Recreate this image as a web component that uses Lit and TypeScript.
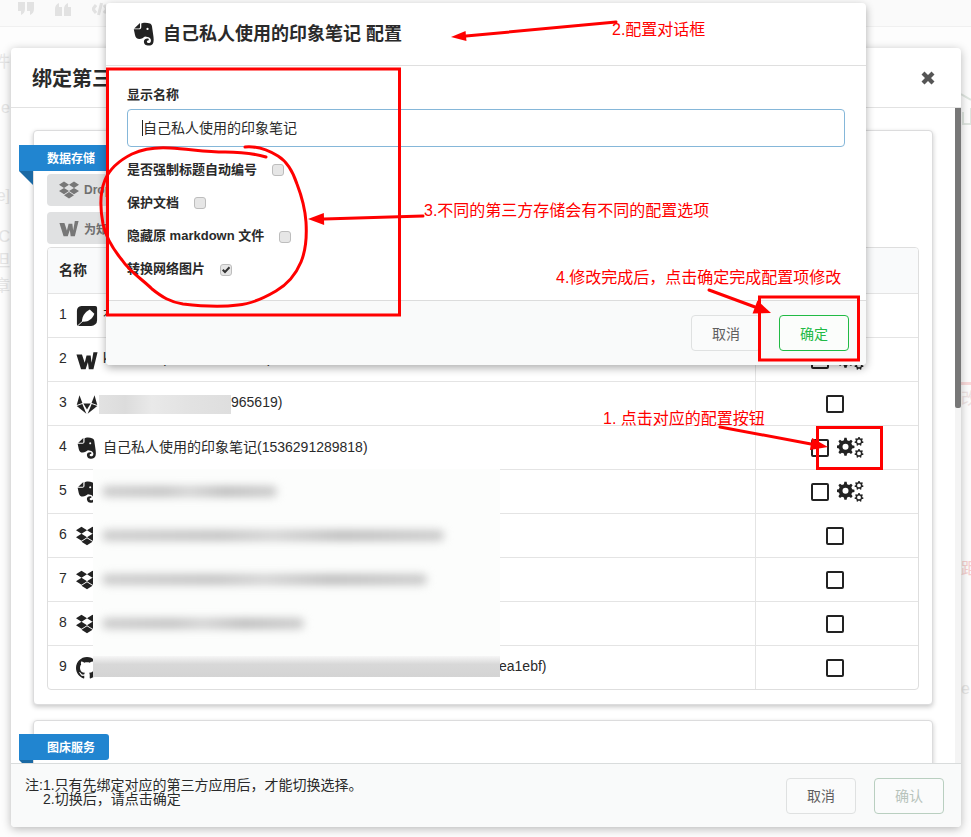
import { LitElement, html, css, svg } from "lit";
import { customElement } from "lit/decorators.js";

const gearPath = (cx: number, cy: number, r: number, hole: number, teeth: number) => {
  const pts: string[] = [];
  const inner = r * 0.76;
  const step = (Math.PI * 2) / teeth;
  for (let i = 0; i < teeth; i++) {
    const a = i * step - Math.PI / 2;
    const w = step * 0.2;
    const seq: [number, number][] = [
      [inner, a - w * 1.5],
      [r, a - w * 0.8],
      [r, a + w * 0.8],
      [inner, a + w * 1.5],
    ];
    for (const [rad, ang] of seq) {
      pts.push(`${(cx + rad * Math.cos(ang)).toFixed(2)} ${(cy + rad * Math.sin(ang)).toFixed(2)}`);
    }
  }
  const ring = `M${cx - hole} ${cy}a${hole} ${hole} 0 1 0 ${hole * 2} 0a${hole} ${hole} 0 1 0 ${-hole * 2} 0z`;
  return `M${pts.join("L")}Z${ring}`;
};

const gears = html`<svg class="gears" viewBox="0 0 27 21" width="27" height="21">
  <path fill-rule="evenodd" fill="#222" d="${gearPath(8.5, 9.8, 9, 3, 8)}"></path>
  <path fill-rule="evenodd" fill="#222" d="${gearPath(22, 4.4, 4.5, 1.9, 7)}"></path>
  <path fill-rule="evenodd" fill="#222" d="${gearPath(22, 16.4, 4.5, 1.9, 7)}"></path>
</svg>`;

const ICONS: Record<string, unknown> = {
  leaf: svg`<path d="M6 1H21a2 2 0 0 1 2 2V16.500a6.500 6.500 0 0 1-6.500 6.500H3a2 2 0 0 1-2-2V6.500A5.500 5.500 0 0 1 6 1z"/>
    <path fill="#fff" d="M6.500 18C6.500 12 10.500 7.500 15 5l5 4.500C18 15.500 12.500 19 6.500 18z"/>
    <path stroke="#fff" stroke-width="1" d="M2 22.500L8 17"/>`,
  wiz: svg`<path d="M.5 6H6.500L9.500 15 11.500 7H16L17 15 19 3.500H23.500L19 22H14L13 14.500 10.500 22H5.500z"/>`,
  gitlab: svg`<path d="M.8 13L3.800 2.500 7 10.800z"/><path d="M23.200 13L20.200 2.500 17 10.800z"/>
    <path d="M8 11.500H16L12 18z"/><path d="M.8 14.300L6.900 12 11.300 22.500z"/><path d="M23.200 14.300L17.100 12 12.700 22.500z"/>`,
  evernote: svg`<path d="M8 5.600c0 .5-.3.8-.8.8H3.500c-.6 0-1 .1-1.300.2L8 1c-.02.5 0 1.200 0 2z"/>
    <path fill-rule="evenodd" d="M9.300 1.500C11 .3 15 .4 18 1.500 19.200 2 19.800 3 20 4.500L21.500 15C22 19 21.500 22 19.500 23 17.500 24 14.500 23.700 13 22.500 11.500 21 11.500 18.500 13 17.300 14 16.500 15.500 16.300 16.500 16.800 17 17.300 17 18 16.300 18.500 15.300 18.500 14.700 19.200 14.900 20 15.200 21 16.500 21.300 17.500 21 18.800 20.500 19.200 19 18.800 17.500 18.300 16 17 15.300 15.500 15L13 14.500C11.500 15.500 9.500 17 7.500 17 5 17 3.500 15.500 3 13L1.800 7.300H7C8.500 7.300 9.300 6.500 9.300 5zM15.500 5.800a1.100 1.100 0 1 0 .01 0z"/>`,
  dropbox: svg`<path d="M6 1.807L0 5.629l6 3.822 6.001-3.822L6 1.807zM18 1.807l-6 3.822 6 3.822 6-3.822-6-3.822zM0 13.274l6 3.822 6.001-3.822L6 9.452l-6 3.822zM18 9.452l-6 3.822 6 3.822 6-3.822-6-3.822zM6 18.371l6.001 3.822 6-3.822-6-3.822L6 18.371z"/>`,
  github: svg`<path transform="scale(1.5)" d="M8 0C3.580 0 0 3.580 0 8c0 3.540 2.290 6.530 5.470 7.590.4.070.55-.17.55-.38 0-.19-.01-.82-.01-1.490-2.010.37-2.530-.49-2.690-.94-.09-.23-.48-.94-.82-1.130-.28-.15-.68-.52-.01-.53.63-.01 1.080.58 1.230.82.72 1.210 1.870.87 2.330.66.070-.52.28-.87.51-1.070-1.780-.2-3.640-.89-3.640-3.950 0-.87.31-1.590.82-2.150-.08-.2-.36-1.020.08-2.120 0 0 .67-.21 2.200.82.64-.18 1.320-.27 2-.27.68 0 1.360.09 2 .27 1.530-1.040 2.200-.82 2.200-.82.44 1.100.16 1.920.08 2.120.51.56.82 1.270.82 2.150 0 3.070-1.870 3.750-3.650 3.950.29.25.54.73.54 1.480 0 1.070-.01 1.930-.01 2.200 0 .21.15.46.55.38A8.013 8.013 0 0 0 16 8c0-4.420-3.580-8-8-8z"/>`,
};

const icon = (name: string, size = 22, color = "#222") =>
  html`<svg class="ic" viewBox="0 0 24 24" width="${size}" height="${size}" style="fill:${color}">${ICONS[name]}</svg>`;

interface Row {
  icon: string;
  name: string;
  gear?: boolean;
  smudge?: number;
  indent?: number;
}

const ROWS: Row[] = [
  { icon: "leaf", name: "有道云笔记(1536291289818)", gear: true },
  { icon: "wiz", name: "kevinlees(1536291289818)", gear: true },
  { icon: "gitlab", name: "965619)", smudge: 132 },
  { icon: "evernote", name: "自己私人使用的印象笔记(1536291289818)", gear: true },
  { icon: "evernote", name: "", gear: true },
  { icon: "dropbox", name: "" },
  { icon: "dropbox", name: "" },
  { icon: "dropbox", name: "" },
  { icon: "github", name: "ea1ebf)", indent: 401 },
];

const BLURS = [175, 342, 325, 202];
const GHOST_LEFT: [string, number][] = [["件", 45], ["e", 46], ["e]", 88], ["C", 41], ["但", 24], ["章", 25]];

const HAND =
  "M245 147C255 146 268 150 278 156C288 162 293 172 297 184C302 197 305 208 306 222C307 238 306 250 301 262C296 274 288 284 276 291C264 298 252 304 238 305C222 307 200 306 183 304C170 302 162 297 152 289C142 279 130 272 122 260C113 249 106 238 103 224C100 208 100 192 105 180C110 168 120 160 132 154C143 149 155 147 170 148C190 149 205 152 225 152C240 152 252 153 266 157";

const arrows: { from: [number, number]; tip: [number, number]; base: [number, number]; wing: number }[] = [
  { from: [616, 22], tip: [451, 37], base: [466, 36], wing: 5 },
  { from: [423, 216], tip: [308, 219], base: [324, 219], wing: 6 },
  { from: [709, 290], tip: [771, 313], base: [755, 307], wing: 7 },
  { from: [720, 427], tip: [828, 447], base: [811, 444], wing: 6 },
];

const NOTES: [string, number, number][] = [
  ["2.配置对话框", 612, 30],
  ["3.不同的第三方存储会有不同的配置选项", 424, 211],
  ["4.修改完成后，点击确定完成配置项修改", 556, 278],
  ["1. 点击对应的配置按钮", 603, 419],
];
const BOXES: [number, number, number, number][] = [
  [107.5, 69, 292, 246],
  [759.5, 297, 99, 63],
  [817.5, 427.500, 64, 41],
];

@customElement("app-root")
export class AppRoot extends LitElement {
  static styles = css`
    :host {
      display: block;
      position: relative;
      width: 971px;
      height: 837px;
      overflow: hidden;
      background: #fdfdfd;
      font-family: "Liberation Sans", "Noto Sans CJK SC", sans-serif;
      font-size: 14px;
      color: #2a2a2a;
    }
    .toolbar {
      height: 26px;
      box-sizing: content-box;
      display: flex;
      gap: 21px;
      padding-left: 18px;
      align-items: flex-start;
      background: #fafafa;
      border-bottom: 1px solid #f0f0f0;
    }
    .tool { display: block; margin-top: 2px; fill: none; stroke: none; }
    .tool-fill { fill: #e2e2e2; }
    .tool-line { fill: none; stroke: #e2e2e2; stroke-width: 3; }
    .ghosts { display: flex; justify-content: space-between; }
    .ghost-col { width: 10px; display: flex; flex-direction: column; overflow: hidden; color: #e6e6e6; font-size: 16px; line-height: 20px; }
    .ghost-item { display: flex; justify-content: flex-end; align-items: flex-end; white-space: nowrap; }
    .ghost-right { width: 10px; display: flex; flex-direction: column; color: #efe4e4; font-size: 16px; line-height: 20px; }
    .house { display: block; margin-top: 63px; margin-bottom: 256px; fill: none; stroke: #dfe6e0; stroke-width: 2; }
    .pink-line { height: 3px; background: #f9dada; margin-bottom: 4px; }
    .pink-1 { height: 30px; }
    .pink-2 { height: 160px; color: #f6cfcf; display: flex; align-items: flex-end; }
    .pink-3 { height: 120px; color: #e6e6e6; display: flex; align-items: flex-end; }

    .modal {
      position: absolute;
      left: 11px;
      top: 48px;
      width: 950px;
      height: 779px;
      display: flex;
      flex-direction: column;
      background: #fff;
      border-radius: 4px;
      box-shadow: 0 2px 10px rgba(0, 0, 0, 0.28);
    }
    .modal-head {
      flex: none;
      height: 60px;
      box-sizing: border-box;
      border-bottom: 1px solid #e2e2e2;
      padding: 0 26px 0 21px;
      display: flex;
      align-items: center;
      justify-content: space-between;
      font-size: 20px;
      font-weight: 700;
    }
    .close { display: block; fill: #555; }
    .modal-body {
      flex: 1;
      min-height: 0;
      position: relative;
      overflow: hidden;
      padding: 22px 28px 0 22px;
      display: flex;
      flex-direction: column;
      gap: 15px;
      background: #fff;
    }
    .scrollbar { position: absolute; right: 0; top: 0; width: 6px; height: 100%; background: #f4f4f4; }
    .thumb { height: 300px; background: #777; border-radius: 0 0 2px 2px; }
    .card {
      position: relative;
      flex: none;
      box-sizing: border-box;
      border: 1px solid #dcdcdd;
      border-radius: 4px;
      background: #fff;
      box-shadow: 0 2px 5px rgba(0, 0, 0, 0.22);
      padding: 43px 13px 0;
      display: flex;
      flex-direction: column;
      height: 575px;
    }
    .card.second { height: 120px; }
    .ribbon {
      position: absolute;
      left: -15px;
      top: 14px;
      width: 90px;
      height: 26px;
      box-sizing: border-box;
      padding: 0 0 2px 28px;
      display: flex;
      align-items: center;
      background: #2185d0;
      color: #fff;
      font-size: 12px;
      font-weight: 700;
      border-radius: 0 3px 3px 0;
    }
    .card.second .ribbon { top: 13px; }
    .ribbon::after {
      content: "";
      position: absolute;
      left: 0;
      top: 100%;
      border-style: solid;
      border-width: 0 14px 14px 0;
      border-color: transparent #1a69a4 transparent transparent;
    }
    .sources { display: flex; flex-direction: column; gap: 6px; margin-bottom: 3px; }
    .source {
      width: 120px;
      height: 32px;
      box-sizing: border-box;
      padding-left: 12px;
      display: flex;
      align-items: center;
      gap: 5px;
      background: #e0e1e2;
      border-radius: 4px;
      color: #6f6f6f;
      font-size: 12px;
      font-weight: 700;
    }
    .table {
      position: relative;
      flex: none;
      height: 443px;
      box-sizing: border-box;
      border: 1px solid #dedede;
      border-radius: 4px;
      display: flex;
      flex-direction: column;
      overflow: hidden;
    }
    .thead {
      flex: none;
      height: 45px;
      display: grid;
      grid-template-columns: 1fr 163px;
      background: #f9fafb;
      font-weight: 700;
      align-items: center;
    }
    .thead > div:first-child { padding: 0 0 4px 11px; }
    .thead > div:last-child { height: 100%; border-left: 1px solid #e4e4e4; }
    .trow {
      flex: none;
      height: 44px;
      box-sizing: border-box;
      border-top: 1px solid #e4e4e4;
      display: grid;
      grid-template-columns: 1fr 163px;
    }
    .cell-name { display: flex; align-items: center; padding-left: 11px; min-width: 0; }
    .num { width: 17px; flex: none; padding-bottom: 3px; }
    .ic { flex: none; display: block; }
    .name { margin-left: 5px; white-space: nowrap; padding-bottom: 3px; }
    .smudge {
      flex: none;
      height: 19px;
      margin-left: 1px;
      margin-top: 2px;
      background: linear-gradient(90deg, #e2e2e2 0, #dcdcdc 20%, #e9e9e9 40%, #e2e2e2 70%, #dedede 100%);
    }
    .smudge + .name { margin-left: 0; }
    .cell-act {
      border-left: 1px solid #e4e4e4;
      display: flex;
      align-items: center;
      justify-content: center;
      gap: 8px;
      padding-left: 1px;
    }
    .cell-act.plain { padding: 0 5px 0 0; }
    .box { width: 14px; height: 14px; border: 2px solid #222; border-radius: 2px; flex: none; background: #fff; }
    .gears { display: block; flex: none; }
    .blur-patch {
      position: absolute;
      left: 45px;
      top: 221px;
      width: 407px;
      height: 208px;
      background: #fcfdfc;
      overflow: hidden;
      display: flex;
      flex-direction: column;
    }
    .blur-row { flex: none; height: 44px; display: flex; align-items: center; padding-left: 9px; }
    .blur-bar {
      height: 11px;
      background: linear-gradient(90deg, #cbcbcb 0, #c2c2c2 35%, #d2d2d2 50%, #bcbcbc 70%, #cacaca 100%);
      filter: blur(4px);
      border-radius: 5px;
    }
    .blur-last {
      flex: 1;
      margin-top: 11px;
      background: linear-gradient(180deg, #f6f6f6 0, #d8d8d8 40%, #d4d4d4 100%);
    }
    .modal-foot {
      flex: none;
      position: relative;
      height: 64px;
      box-sizing: border-box;
      border-top: 1px solid #d9dcdc;
      background: #f9fafa;
      border-radius: 0 0 4px 4px;
      padding: 0 17px 0 14px;
      display: flex;
      align-items: center;
      justify-content: space-between;
      font-size: 14px;
      line-height: 14px;
    }
    .foot-note { padding-bottom: 8px; }
    .foot-note div + div { padding-left: 18px; }
    .btns { display: flex; gap: 18px; }
    .btn {
      width: 70px;
      height: 36px;
      box-sizing: border-box;
      border: 1px solid #dfe1e1;
      border-radius: 4px;
      display: flex;
      align-items: center;
      justify-content: center;
      font-size: 14px;
      color: #5f5f5f;
      background: #fafbfb;
    }
    .btn.faded { border-color: #b9cfc0; color: #b8c4bc; }
    .btn.ok { border-color: #21ba45; color: #21ba45; background: #fbfdfb; }

    .dialog {
      position: absolute;
      left: 106px;
      top: 3px;
      width: 760px;
      height: 362px;
      display: flex;
      flex-direction: column;
      background: #fff;
      border-radius: 4px;
      box-shadow: 0 3px 9px rgba(0, 0, 0, 0.32);
    }
    .dialog-head {
      flex: none;
      height: 63px;
      box-sizing: border-box;
      border-bottom: 1px solid #dfdfdf;
      padding-left: 26px;
      display: flex;
      align-items: center;
      gap: 7px;
      font-size: 18px;
      font-weight: 700;
    }
    .dialog-title { padding-bottom: 5px; }
    .dialog-body {
      flex: 1;
      min-height: 0;
      box-sizing: border-box;
      padding: 21px 21px 0;
      font-size: 13px;
      font-weight: 700;
      line-height: 16px;
    }
    .input {
      margin-top: 6px;
      height: 38px;
      box-sizing: border-box;
      border: 1px solid #85b7d9;
      border-radius: 4px;
      padding-left: 14px;
      display: flex;
      align-items: center;
      font-size: 14px;
      font-weight: 400;
    }
    .caret { width: 1px; height: 16px; background: #222; }
    .options { margin-top: 13px; display: flex; flex-direction: column; gap: 13.333px; }
    .opt { height: 20px; display: flex; align-items: center; gap: 15px; white-space: nowrap; }
    .opt-label { padding-bottom: 1px; }
    .chk {
      width: 12px;
      height: 12px;
      box-sizing: border-box;
      border: 1px solid #bdbdbd;
      border-radius: 3px;
      background: #e6e6e6;
      flex: none;
      display: flex;
      align-items: center;
      justify-content: center;
    }
    .dialog-foot {
      flex: none;
      height: 65px;
      box-sizing: border-box;
      border-top: 1px solid #dcdcdc;
      background: #f9fafa;
      border-radius: 0 0 4px 4px;
      padding-right: 17px;
      display: flex;
      align-items: center;
      justify-content: flex-end;
    }
    .overlay { position: absolute; left: 0; top: 0; pointer-events: none; }
    .note {
      position: absolute;
      font-size: 16px;
      line-height: 20px;
      color: #f00;
      white-space: nowrap;
    }
  `;

  private renderRow(r: Row, i: number) {
    return html`<div class="trow">
      <div class="cell-name">
        <span class="num">${i + 1}</span>
        ${icon(r.icon)}
        ${r.smudge ? html`<span class="smudge" style="width:${r.smudge}px"></span>` : ""}
        <span class="name" style="margin-left:${r.indent ? r.indent + "px" : ""}">${r.name}</span>
      </div>
      <div class="cell-act ${r.gear ? "" : "plain"}">
        <span class="box"></span>${r.gear ? gears : ""}
      </div>
    </div>`;
  }

  private arrow(a: (typeof arrows)[number]) {
    const [bx, by] = a.base;
    const dx = a.tip[0] - a.from[0];
    const dy = a.tip[1] - a.from[1];
    const len = Math.hypot(dx, dy);
    const nx = (-dy / len) * a.wing;
    const ny = (dx / len) * a.wing;
    return svg`<line x1="${a.from[0]}" y1="${a.from[1]}" x2="${bx}" y2="${by}" stroke="#f00" stroke-width="3" stroke-linecap="round"></line>
      <polygon fill="#f00" points="${a.tip[0]},${a.tip[1]} ${bx + nx},${by + ny} ${bx - nx},${by - ny}"></polygon>`;
  }

  render() {
    return html`
      <div class="toolbar">
        <svg class="tool" width="16" height="14" viewBox="0 0 16 14"><path class="tool-fill" d="M0 0h7v7c0 3-1.500 5-4 6V9H0zM9 0h7v7c0 3-1.500 5-4 6V9H9z"></path></svg>
        <svg class="tool" width="16" height="14" viewBox="0 0 16 14"><path class="tool-fill" d="M7 14H0V7c0-3 1.500-5 4-6v4h3zM16 14H9V7c0-3 1.500-5 4-6v4h3z"></path></svg>
        <svg class="tool" width="16" height="14" viewBox="0 0 16 14"><path class="tool-line" d="M4 3L1 7l3 4M12 3l3 4-3 4M9.500 1l-3 12"></path></svg>
      </div>
      <div class="ghosts">
        <div class="ghost-col">
          ${GHOST_LEFT.map(([t, h]) => html`<div class="ghost-item" style="height:${h}px">${t}</div>`)}
        </div>
        <div class="ghost-right">
          <svg class="house" width="10" height="36" viewBox="0 0 10 36"><path d="M0 4L10 10M2 22v12h8v-16"></path></svg>
          <div class="pink-line"></div>
          <div class="pink-1">改</div>
          <div class="pink-2">距</div>
          <div class="pink-3">e</div>
        </div>
      </div>

      <section class="modal">
        <header class="modal-head">
          <span>绑定第三方应用</span>
          <svg class="close" width="14" height="14" viewBox="0 0 14 14"><path d="M3.500.5L7 4 10.500.5 13.500 3.500 10 7l3.500 3.500-3 3L7 10l-3.500 3.500-3-3L4 7 .5 3.500z"></path></svg>
        </header>
        <div class="modal-body">
          <div class="card">
            <div class="ribbon">数据存储</div>
            <div class="sources">
              <div class="source">${icon("dropbox", 20, "#777")}<span>Dropbox</span></div>
              <div class="source">${icon("wiz", 20, "#777")}<span>为知笔记</span></div>
            </div>
            <div class="table">
              <div class="thead"><div>名称</div><div></div></div>
              ${ROWS.map((r, i) => this.renderRow(r, i))}
              <div class="blur-patch">
                ${BLURS.map((w) => html`<div class="blur-row"><div class="blur-bar" style="width:${w}px"></div></div>`)}
                <div class="blur-last"></div>
              </div>
            </div>
          </div>
          <div class="card second"><div class="ribbon">图床服务</div></div>
          <div class="scrollbar"><div class="thumb"></div></div>
        </div>
        <footer class="modal-foot">
          <div class="foot-note">
            <div>注:1.只有先绑定对应的第三方应用后，才能切换选择。</div>
            <div>2.切换后，请点击确定</div>
          </div>
          <div class="btns"><div class="btn">取消</div><div class="btn faded">确认</div></div>
        </footer>
      </section>

      <section class="dialog">
        <header class="dialog-head">${icon("evernote", 24)}<span class="dialog-title">自己私人使用的印象笔记 配置</span></header>
        <div class="dialog-body">
          <div>显示名称</div>
          <div class="input"><span class="caret"></span><span>自己私人使用的印象笔记</span></div>
          <div class="options">
            <div class="opt"><span class="opt-label">是否强制标题自动编号</span><span class="chk"></span></div>
            <div class="opt"><span class="opt-label">保护文档</span><span class="chk"></span></div>
            <div class="opt"><span class="opt-label">隐藏原 markdown 文件</span><span class="chk"></span></div>
            <div class="opt">
              <span class="opt-label">转换网络图片</span>
              <span class="chk"><svg width="10" height="10" viewBox="0 0 10 10"><path d="M1 5.500L2.500 4 4 5.500 7.800 1.500 9.200 3 4 8.500z" fill="#333"></path></svg></span>
            </div>
          </div>
        </div>
        <footer class="dialog-foot">
          <div class="btns"><div class="btn">取消</div><div class="btn ok">确定</div></div>
        </footer>
      </section>

      <svg class="overlay" width="971" height="837" viewBox="0 0 971 837">
        ${BOXES.map(([x, y, w, h]) => svg`<rect x="${x}" y="${y}" width="${w}" height="${h}" fill="none" stroke="#f00" stroke-width="3"></rect>`)}
        <path d="${HAND}" fill="none" stroke="#f00" stroke-width="3" stroke-linecap="round"></path>
        ${arrows.map((a) => this.arrow(a))}
      </svg>
      ${NOTES.map(([t, x, y]) => html`<div class="note" style="left:${x}px;top:${y - 10}px">${t}</div>`)}
    `;
  }
}
